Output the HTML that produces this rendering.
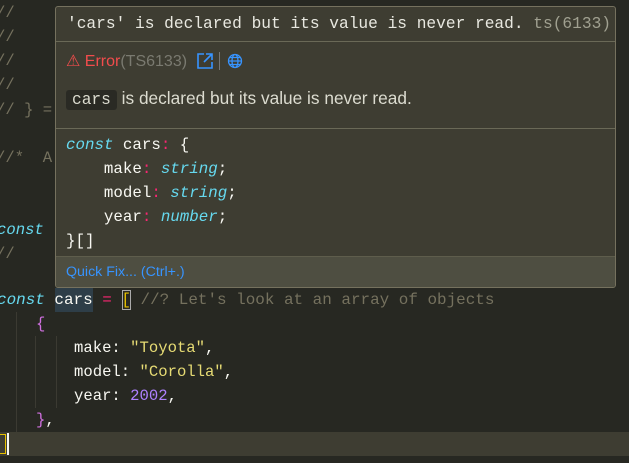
<!DOCTYPE html>
<html><head><meta charset="utf-8"><style>
body{margin:0;width:629px;height:463px;background:#272822;overflow:hidden;position:relative;font-family:"Liberation Mono",monospace;}
.l{position:absolute;left:0;height:24px;line-height:24px;font-size:15.6px;color:#f8f8f2;white-space:pre;}
.c{color:#75715e}.k{color:#66d9ef;font-style:italic}.s{color:#e6db74}.n{color:#ae81ff}.p{color:#f92672}
.g{position:absolute;width:1px;background:#3b3a32}
#tip{position:absolute;left:55px;top:6px;width:559px;height:280px;background:#3e3d32;border:1px solid #75715e;border-radius:3px;overflow:hidden;}
.hd{height:34px;line-height:34px;padding-left:11px;font-size:16.2px;color:#e8e8e0;border-bottom:1px solid #6a6957;white-space:pre}
.sec{position:absolute;left:0;right:0;}
.sans{font-family:"Liberation Sans",sans-serif}
.code{position:absolute;left:10px;font-size:15.8px;line-height:24px;white-space:pre;color:#f8f8f2}
.ty{color:#66d9ef;font-style:italic}.co{color:#f92672}
</style></head><body>
<div class="l c" style="top:1px;left:-4px">//</div>
<div class="l c" style="top:25px;left:-4px">//</div>
<div class="l c" style="top:49px;left:-4px">//</div>
<div class="l c" style="top:73px;left:-4px">//</div>
<div class="l c" style="top:98px;left:-4px">// } =</div>
<div class="l c" style="top:146px;left:-4px">//*  A</div>
<div class="l k" style="top:218px;left:-3px">const</div>
<div class="l c" style="top:242px;left:-4px">//</div>
<div style="position:absolute;left:0;top:432px;width:629px;height:24px;background:#3e3d32"></div>
<div class="g" style="left:16px;top:312px;height:120px"></div>
<div class="g" style="left:35px;top:336px;height:72px"></div>
<div class="g" style="left:56px;top:336px;height:72px"></div>
<div style="position:absolute;left:55px;top:288px;width:38px;height:24px;background:#2e3e48"></div>
<div style="position:absolute;left:122px;top:290px;width:9px;height:20px;border:1px solid #aaa;box-sizing:border-box"></div>
<div class="l" style="top:288px;left:-3px;font-size:15.95px"><span class="k">const</span> cars <span class="p">=</span> <span style="color:#e6c000">[</span> <span class="c">//? Let's look at an array of objects</span></div>
<div class="l" style="top:312px;left:36px;color:#d070e0">{</div>
<div class="l" style="top:336px;left:74px">make: <span class="s">"Toyota"</span>,</div>
<div class="l" style="top:360px;left:74px">model: <span class="s">"Corolla"</span>,</div>
<div class="l" style="top:384px;left:74px">year: <span class="n">2002</span>,</div>
<div class="l" style="top:408px;left:36px"><span style="color:#d070e0">}</span>,</div>
<div style="position:absolute;left:-2px;top:434px;width:8px;height:20px;border:1px solid #e6c000;box-sizing:border-box"></div>
<div style="position:absolute;left:7px;top:433px;width:2px;height:22px;background:#f8f8f0"></div>
<div id="tip">
<div class="hd">'cars' is declared but its value is never read. <span style="color:#a0a090">ts(6133)</span></div>
<div class="sec sans" style="top:35px;height:86px;">
 <div style="position:absolute;left:10px;top:9px;font-size:16px;color:#f14c4c">⚠ Error<span style="color:#7a7a70">(TS6133)</span></div>
 <svg style="position:absolute;left:140px;top:10px" width="18" height="18" viewBox="0 0 18 18"><path d="M8 2H2v14h14v-6M10 2h6v6M16 2L8 10" fill="none" stroke="#3794ff" stroke-width="1.6"/></svg>
 <div style="position:absolute;left:163px;top:10px;width:1px;height:18px;background:#777"></div>
 <svg style="position:absolute;left:171px;top:11px" width="16" height="16" viewBox="0 0 16 16" fill="none" stroke="#3794ff" stroke-width="1.3"><circle cx="8" cy="8" r="6.5"/><ellipse cx="8" cy="8" rx="3" ry="6.5"/><path d="M1.5 8h13M2.5 4.5h11M2.5 11.5h11"/></svg>
 <div style="position:absolute;left:10px;top:46px;font-size:17.3px;color:#dcdcd0;white-space:pre"><span style="background:#2a2a24;border-radius:3px;padding:1px 6px;font-family:'Liberation Mono',monospace;font-size:16.2px">cars</span> is declared but its value is never read.</div>
</div>
<div class="sec" style="top:121px;height:128px;border-top:1px solid #6a6957;">
 <div class="code" style="top:4px"><span class="ty">const</span> cars<span class="co">:</span> {
    make<span class="co">:</span> <span class="ty">string</span>;
    model<span class="co">:</span> <span class="ty">string</span>;
    year<span class="co">:</span> <span class="ty">number</span>;
}[]</div>
</div>
<div class="sec sans" style="top:249px;bottom:0;background:#4e4e41;border-top:1px solid #5e5d4c;">
 <div style="position:absolute;left:10px;top:7px;font-size:14.2px;color:#3794ff">Quick Fix... (Ctrl+.)</div>
</div>
</div>
</body></html>
